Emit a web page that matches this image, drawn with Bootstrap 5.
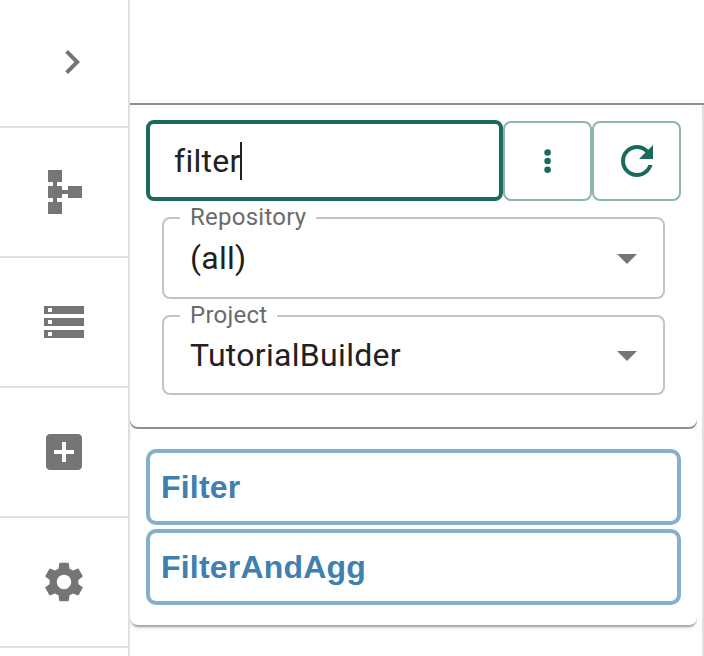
<!DOCTYPE html>
<html lang="en">
<head>
<meta charset="utf-8">
<meta name="viewport" content="width=device-width, initial-scale=1">
<title>Tutorial Builder</title>
<link href="https://cdn.jsdelivr.net/npm/bootstrap@5.3.0/dist/css/bootstrap.min.css" rel="stylesheet">
<style>
body { font-family: Roboto, sans-serif; color: #212121; letter-spacing: .3px; }
.side-rail { width: 130px; border-right: 2px solid #e0e0e0; }
.rail-btn, .rail-btn:hover { height: 130px; border: 0; border-bottom: 2px solid #e0e0e0; border-radius: 0; color: #757575; flex: none; }
.rail-btn.rail-first { height: 128px; padding: 0 12px 2px 28px; }
.rail-btn svg, .tool-btn svg { display: block; fill: currentColor; }
.main-pane { min-width: 0; }
.top-strip { height: 105px; border-bottom: 2px solid #8f8f8f; flex: none; }
.pane-body { border-right: 2px solid #e0e0e0; }
.panel-clip { width: 567px; overflow: hidden; flex: none; }
.panel { border-radius: 8px; background: #fff; box-shadow: 0 4px 2px -2px rgba(0,0,0,.2), 0 2px 2px rgba(0,0,0,.14), 0 2px 6px rgba(0,0,0,.12); }
.clip-filters { height: 324px; }
.panel-filters { height: 322px; padding: 15px 16px 0; box-shadow: 0 2px 0 #8f8f8f, 0 2px 6px rgba(0,0,0,.12); }
.clip-results { height: 227px; }
.panel-results { height: 196px; padding: 20px 16px 0; gap: 4px; }
.search-box { width: 357px; height: 81px; border: 4px solid #1a6b5e; border-radius: 8px; padding-left: 24px; font-size: 32px; line-height: 48px; }
.text-caret { width: 2px; height: 38px; background: #212121; margin-left: -1px; }
.tool-btn, .tool-btn:hover { width: 89px; height: 80px; margin-top: 1px; border: 2px solid #8cb5ae; border-radius: 8px; color: #1a6b5e; }
.select-box { width: 503px; height: 82px; margin: 16px 0 0 16px; border: 2px solid #c4c4c4; border-radius: 8px; padding: 0 26px; font-size: 32px; line-height: 48px; }
.select-box svg { margin-top: 2px; }
.select-box.project { height: 80px; }
.select-label { position: absolute; left: 16px; top: -16px; padding: 0 10px 0 10px; background: #fff; color: #6b6b6b; font-size: 24px; line-height: 28px; letter-spacing: .25px; }
.result-item { height: 76px; border: 4px solid #86afcd; border-radius: 10px; padding: 0 10px 0 11px; color: #4080b1; font: bold 32px/48px "Liberation Sans", Arial, sans-serif; letter-spacing: .2px; }
</style>
<script src="https://cdn.jsdelivr.net/npm/bootstrap@5.3.0/dist/js/bootstrap.bundle.min.js"></script>
</head>
<body class="bg-white">
<div class="d-flex vh-100 overflow-hidden">
  <nav class="side-rail d-flex flex-column flex-shrink-0 overflow-hidden">
    <button class="btn rail-btn rail-first d-flex align-items-center justify-content-center" aria-label="Expand">
      <svg width="48" height="48" viewBox="0 0 24 24"><path d="M8.59 16.59 13.17 12 8.59 7.41 10 6l6 6-6 6z"/></svg>
    </button>
    <button class="btn rail-btn d-flex align-items-center justify-content-center" aria-label="Workflow">
      <svg width="48" height="48" viewBox="0 0 48 48"><path d="M8 2h14v12h-5v4h5v4h6v-4h14v12H28v-4h-6v4h-5v4h5v12H8V34h5v-4H8V18h5v-4H8z"/></svg>
    </button>
    <button class="btn rail-btn d-flex align-items-center justify-content-center" aria-label="Storage">
      <svg width="48" height="48" viewBox="0 0 24 24"><path fill-rule="evenodd" d="M2 4h20v4H2zM4 5v2h2V5zM2 10h20v4H2zM4 11v2h2v-2zM2 16h20v4H2zM4 17v2h2v-2z"/></svg>
    </button>
    <button class="btn rail-btn d-flex align-items-center justify-content-center" aria-label="Add">
      <svg width="48" height="48" viewBox="0 0 24 24"><path d="M19 3H5c-1.11 0-2 .9-2 2v14c0 1.1.89 2 2 2h14c1.1 0 2-.9 2-2V5c0-1.1-.9-2-2-2zm-2 10h-4v4h-2v-4H7v-2h4V7h2v4h4v2z"/></svg>
    </button>
    <button class="btn rail-btn d-flex align-items-center justify-content-center" aria-label="Settings">
      <svg width="48" height="48" viewBox="0 0 24 24"><path d="M19.14 12.94c.04-.3.06-.61.06-.94 0-.32-.02-.64-.07-.94l2.03-1.58c.18-.14.23-.41.12-.61l-1.92-3.32c-.12-.22-.37-.29-.59-.22l-2.39.96c-.5-.38-1.03-.7-1.62-.94l-.36-2.54c-.04-.24-.24-.41-.48-.41h-3.84c-.24 0-.43.17-.47.41l-.36 2.54c-.59.24-1.13.57-1.62.94l-2.39-.96c-.22-.08-.47 0-.59.22L2.74 8.87c-.12.21-.08.47.12.61l2.03 1.58c-.05.3-.09.63-.09.94s.02.64.07.94l-2.03 1.58c-.18.14-.23.41-.12.61l1.92 3.32c.12.22.37.29.59.22l2.39-.96c.5.38 1.03.7 1.62.94l.36 2.54c.05.24.24.41.48.41h3.84c.24 0 .44-.17.47-.41l.36-2.54c.59-.24 1.13-.56 1.62-.94l2.39.96c.22.08.47 0 .59-.22l1.92-3.32c.12-.22.07-.47-.12-.61l-2.01-1.58zM12 15.6c-1.98 0-3.6-1.62-3.6-3.6s1.62-3.6 3.6-3.6 3.6 1.62 3.6 3.6-1.62 3.6-3.6 3.6z"/></svg>
    </button>
  </nav>
  <main class="main-pane d-flex flex-column flex-grow-1">
    <div class="top-strip"></div>
    <div class="pane-body flex-grow-1 d-flex flex-column">
      <div class="panel-clip clip-filters">
        <section class="panel panel-filters">
          <div class="d-flex">
            <div class="search-box d-flex align-items-center"><span>filter</span><span class="text-caret"></span></div>
            <button class="btn tool-btn d-flex align-items-center justify-content-center p-0" aria-label="More">
              <svg width="40" height="40" viewBox="0 0 40 40"><circle cx="19.6" cy="11.5" r="3.3"/><circle cx="19.6" cy="20" r="3.3"/><circle cx="19.6" cy="28.7" r="3.3"/></svg>
            </button>
            <button class="btn tool-btn d-flex align-items-center justify-content-center p-0" aria-label="Refresh">
              <svg width="48" height="48" viewBox="0 0 24 24"><path d="M17.65 6.35C16.2 4.9 14.21 4 12 4c-4.42 0-7.99 3.58-7.99 8s3.57 8 7.99 8c3.73 0 6.84-2.55 7.73-6h-2.08c-.82 2.33-3.04 4-5.65 4-3.31 0-6-2.69-6-6s2.69-6 6-6c1.66 0 3.14.69 4.22 1.78L13 11h7V4l-2.35 2.35z"/></svg>
            </button>
          </div>
          <div class="select-box position-relative d-flex align-items-center justify-content-between">
            <span class="select-label">Repository</span><span>(all)</span>
            <svg width="20" height="10" viewBox="0 0 20 10" fill="#757575"><path d="M0 0h20L10 10z"/></svg>
          </div>
          <div class="select-box project position-relative d-flex align-items-center justify-content-between">
            <span class="select-label">Project</span><span>TutorialBuilder</span>
            <svg width="20" height="10" viewBox="0 0 20 10" fill="#757575"><path d="M0 0h20L10 10z"/></svg>
          </div>
        </section>
      </div>
      <div class="panel-clip clip-results">
        <section class="panel panel-results d-flex flex-column">
          <div class="result-item d-flex align-items-center">Filter</div>
          <div class="result-item d-flex align-items-center">FilterAndAgg</div>
        </section>
      </div>
    </div>
  </main>
</div>
</body>
</html>
